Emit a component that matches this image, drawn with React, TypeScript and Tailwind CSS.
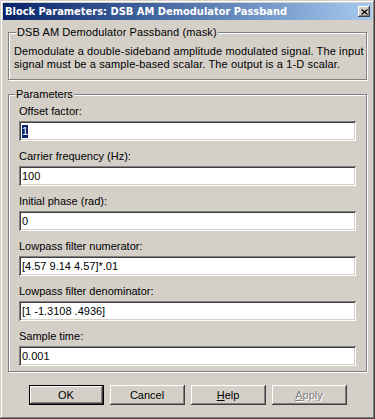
const font = { fontFamily: '"Liberation Sans", Arial, sans-serif' };

const params = [
  { label: 'Offset factor:', value: '1', selected: true },
  { label: 'Carrier frequency (Hz):', value: '100' },
  { label: 'Initial phase (rad):', value: '0' },
  { label: 'Lowpass filter numerator:', value: '[4.57 9.14 4.57]*.01' },
  { label: 'Lowpass filter denominator:', value: '[1 -1.3108 .4936]' },
  { label: 'Sample time:', value: '0.001' },
];

function Field({ value, selected }: { value: string; selected?: boolean }) {
  return (
    <div className="h-[20px] bg-white pl-[3px] flex items-center text-[11px] leading-[13px] text-black shadow-[inset_1px_1px_#808080,inset_-1px_-1px_#fff,inset_2px_2px_#404040,inset_-2px_-2px_#d4d0c8]">
      {selected ? <span className="bg-[#0a246a] text-white">{value}</span> : <span>{value}</span>}
    </div>
  );
}

function Button({ children, isDefault, disabled }: { children: React.ReactNode; isDefault?: boolean; disabled?: boolean }) {
  const bevel = 'shadow-[inset_-1px_-1px_#404040,inset_1px_1px_#fff,inset_-2px_-2px_#808080,inset_2px_2px_#d4d0c8]';
  return (
    <div className={`w-[75px] h-[20px] ${isDefault ? 'border border-black' : ''}`}>
      <div
        className={`w-full h-full flex items-center justify-center text-[11px] ${bevel} ${
          disabled ? 'text-[#808080] [text-shadow:1px_1px_0_#fff]' : 'text-black'
        }`}
      >
        {children}
      </div>
    </div>
  );
}

export default function App() {
  return (
    <div
      className="w-[375px] h-[419px] bg-[#d4d0c8] p-[3px] flex flex-col shadow-[inset_-1px_-1px_#404040,inset_1px_1px_#d4d0c8,inset_-2px_-2px_#808080,inset_2px_2px_#fff]"
      style={font}
    >
      {/* title bar */}
      <div className="h-[17px] flex items-center justify-between pl-[2px] pr-[2px] bg-gradient-to-r from-[#0a246a] to-[#a6caf0]">
        <span className="text-white font-bold text-[11px] leading-[14px] font-['DejaVu_Sans_Condensed','Liberation_Sans',sans-serif]">
          Block Parameters: DSB AM Demodulator Passband
        </span>
        <div className="w-[12px] h-[11px] bg-[#d4d0c8] flex items-center justify-center shadow-[inset_-1px_-1px_#404040,inset_1px_1px_#fff,inset_-2px_-2px_#808080]">
          <svg width="7" height="6" viewBox="0 0 7 6">
            <path d="M0.5 0.5 L6.5 5.5 M6.5 0.5 L0.5 5.5" stroke="#000" strokeWidth="1.3" />
          </svg>
        </div>
      </div>

      {/* description group */}
      <div className="mx-[5px] mt-[12px] border border-[#808080] shadow-[inset_1px_1px_#fff,1px_1px_#fff] pl-[5px] pb-[8px] text-[11px] text-black">
        <div className="-mt-[7px] ml-[2px] px-[1px] h-[13px] leading-[13px] bg-[#d4d0c8] w-fit tracking-[0.1px]">
          DSB AM Demodulator Passband (mask)
        </div>
        <div className="pt-[6px] leading-[13px] tracking-[0.12px]">
          <div>Demodulate a double-sideband amplitude modulated signal. The input</div>
          <div>signal must be a sample-based scalar. The output is a 1-D scalar.</div>
        </div>
      </div>

      {/* parameters group */}
      <div className="mx-[5px] mt-[14px] border border-[#808080] shadow-[inset_1px_1px_#fff,1px_1px_#fff] px-[10px] pb-[5px] text-[11px] text-black">
        <div className="-mt-[7px] -ml-[4px] px-[1px] h-[13px] leading-[13px] bg-[#d4d0c8] w-fit">Parameters</div>
        {params.map((p, i) => (
          <div key={p.label}>
            <div className={`${i === 0 ? 'h-[20px]' : 'h-[25px]'} flex items-end pb-[3px] leading-[14px]`}>{p.label}</div>
            <Field value={p.value} selected={p.selected} />
          </div>
        ))}
      </div>

      {/* buttons */}
      <div className="mt-[13px] flex justify-center gap-[6px]">
        <Button isDefault>OK</Button>
        <Button>Cancel</Button>
        <Button>
          <span className="underline">H</span>elp
        </Button>
        <Button disabled>
          <span className="underline">A</span>pply
        </Button>
      </div>
    </div>
  );
}
